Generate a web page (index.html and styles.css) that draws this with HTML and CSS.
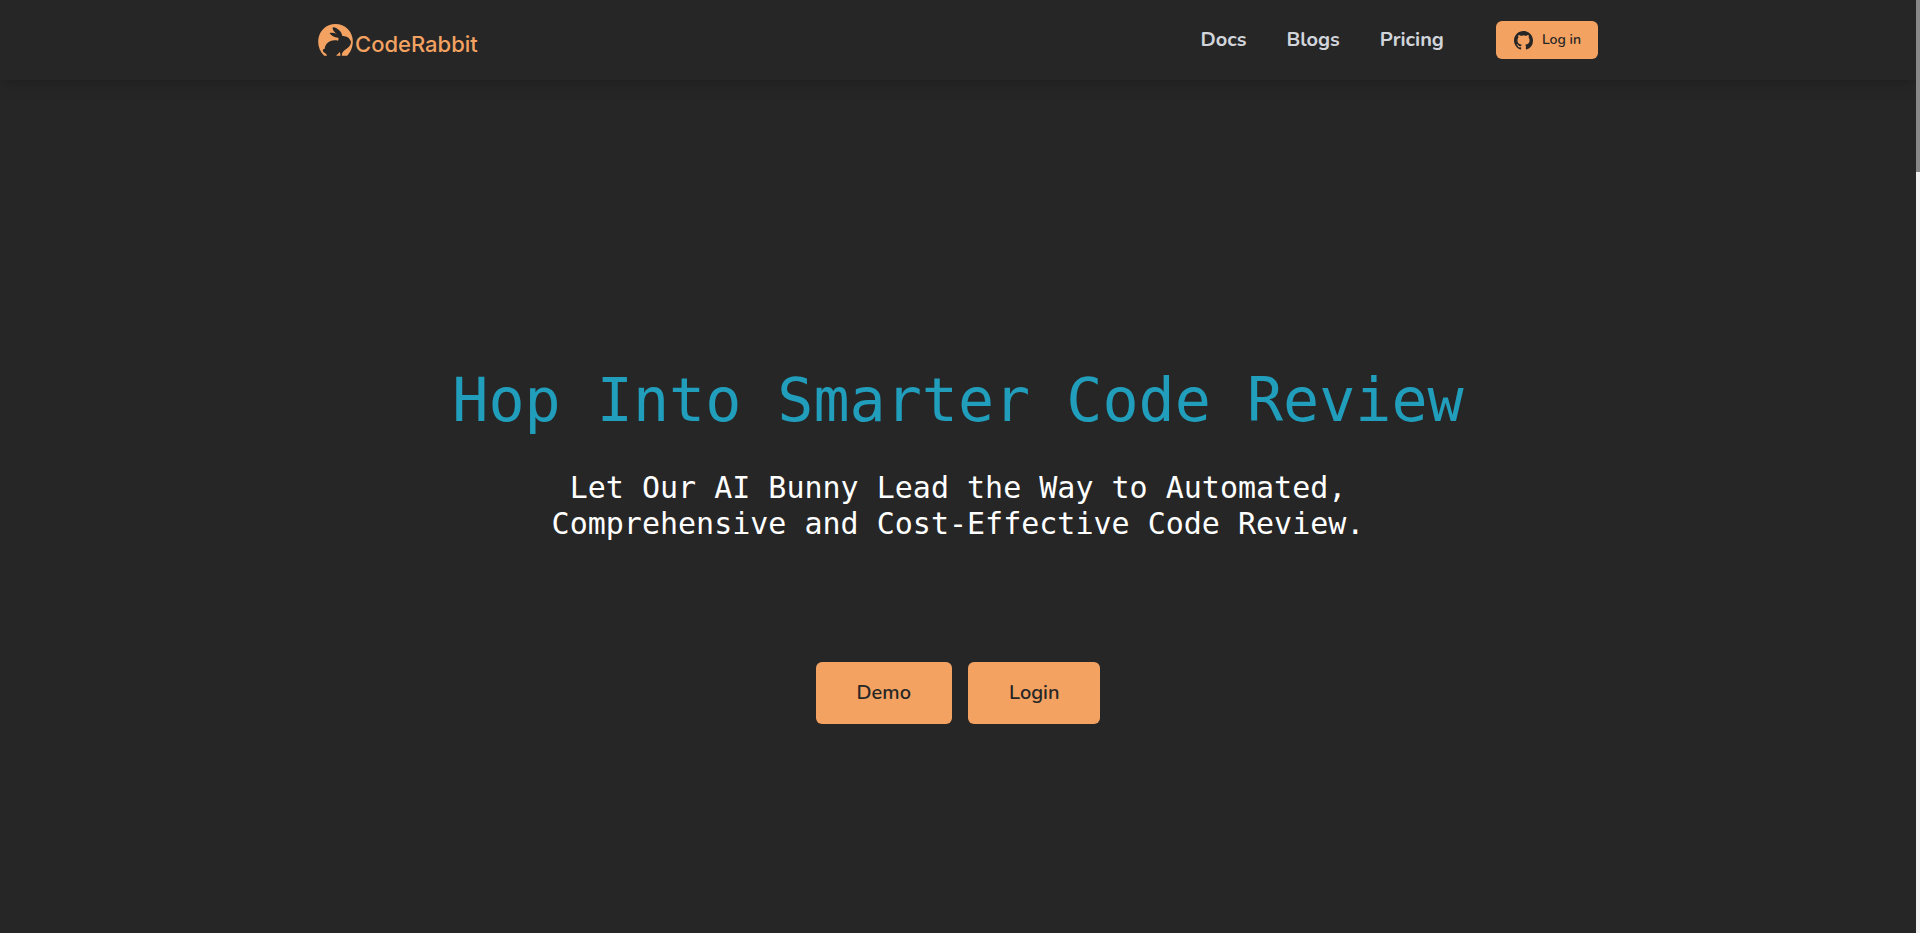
FILE: index.html
```html
<!DOCTYPE html>
<html lang="en">
<head>
<meta charset="utf-8">
<meta name="viewport" content="width=device-width, initial-scale=1">
<title>CodeRabbit</title>
<link rel="stylesheet" href="styles.css">
</head>
<body>
<div class="page">
  <header class="header">
    <div class="header-inner">
      <a class="logo" href="#">
        <svg class="logo-mark" viewBox="0 0 104 96" aria-hidden="true">
          <path fill="#f4a261" d="M18 95C6 84 0 70 0 52A52 52 0 0 1 104 52C104 70 97 85 87 95H71C71 88 73 84 79 79C86 74 93 69 96 63C98 60 99 56 98 52C95 44 88 38 79 37C76 36 74 36 72 35C71 27 65 18 54 12C49 10 44 9 43 12C44 19 49 25 56 30C49 26 41 25 34 27C39 35 48 40 60 41C62 44 61 48 59 50C48 47 35 49 27 58C22 63 20 69 20 74C14 74 12 80 16 84C20 87 25 90 27 95Z"/>
          <path fill="#f4a261" d="M54 95C57 91 61 89 65 84C66 87 67 91 67 95Z"/>
        </svg>
        <span class="logo-text">CodeRabbit</span>
      </a>
      <nav class="nav">
        <a class="nav-link" href="#">Docs</a>
        <a class="nav-link" href="#">Blogs</a>
        <a class="nav-link" href="#">Pricing</a>
        <button class="button button-small" type="button">
          <svg class="github" viewBox="0 0 16 16" aria-hidden="true"><path fill="currentColor" d="M8 0C3.58 0 0 3.58 0 8c0 3.54 2.29 6.53 5.47 7.59.4.07.55-.17.55-.38 0-.19-.01-.82-.01-1.49-2.01.37-2.53-.49-2.69-.94-.09-.23-.48-.94-.82-1.13-.28-.15-.68-.52-.01-.53.63-.01 1.08.58 1.23.82.72 1.21 1.87.87 2.33.66.07-.52.28-.87.51-1.07-1.78-.2-3.64-.89-3.64-3.95 0-.87.31-1.59.82-2.15-.08-.2-.36-1.02.08-2.12 0 0 .67-.21 2.2.82.64-.18 1.32-.27 2-.27s1.36.09 2 .27c1.53-1.04 2.2-.82 2.2-.82.44 1.1.16 1.92.08 2.12.51.56.82 1.27.82 2.15 0 3.07-1.87 3.75-3.65 3.95.29.25.54.73.54 1.48 0 1.07-.01 1.93-.01 2.2 0 .21.15.46.55.38A8.01 8.01 0 0 0 16 8c0-4.42-3.58-8-8-8Z"/></svg>
          Log in
        </button>
      </nav>
    </div>
  </header>
  <main class="hero">
    <h1 class="title">Hop Into Smarter Code Review</h1>
    <p class="subtitle">Let Our AI Bunny Lead the Way to Automated,<br>Comprehensive and Cost-Effective Code Review.</p>
    <div class="actions">
      <button class="button button-large" type="button">Demo</button>
      <button class="button button-large" type="button">Login</button>
    </div>
  </main>
</div>
<div class="scrollbar" aria-hidden="true"><div class="scrollbar-thumb"></div></div>
</body>
</html>
```
FILE: styles.css
```css
* {
  box-sizing: border-box;
}

body {
  margin: 0;
  min-height: 100vh;
  display: flex;
  background: #262626;
  font-family: Nunito, Lato, sans-serif;
}

.page {
  flex: 1;
  min-width: 0;
  display: flex;
  flex-direction: column;
}

.header {
  padding: 0 24px;
  box-shadow: 0 10px 15px -3px rgba(0, 0, 0, 0.1), 0 4px 6px -4px rgba(0, 0, 0, 0.1);
}

.header-inner {
  max-width: 1280px;
  min-height: 80px;
  margin: 0 auto;
  display: flex;
  align-items: center;
  justify-content: space-between;
}

.logo {
  display: flex;
  align-items: flex-end;
  gap: 2px;
  color: #f4a261;
  text-decoration: none;
}

.logo-mark {
  width: 35px;
  height: 32px;
}

.logo-text {
  font: 500 22px/24px Inter, sans-serif;
}

.nav {
  display: flex;
  align-items: center;
  gap: 40px;
}

.nav-link {
  color: #d1d5db;
  font-size: 20px;
  line-height: 28px;
  font-weight: 700;
  text-decoration: none;
}

.button {
  display: inline-flex;
  align-items: center;
  justify-content: center;
  border: 0;
  border-radius: 6px;
  background: #f4a261;
  color: #262626;
  font-family: inherit;
  font-weight: 600;
  cursor: pointer;
}

.button-small {
  gap: 9px;
  margin-left: 12px;
  padding: 9px 17px 9px 18px;
  font-size: 14px;
  line-height: 20px;
}

.github {
  width: 19px;
  height: 19px;
}

.hero {
  flex: 1;
  display: flex;
  flex-direction: column;
  align-items: center;
  justify-content: center;
  padding: 80px 24px 0;
  text-align: center;
}

.title {
  margin: 0;
  color: #219ebc;
  font: 400 60px/60px "DejaVu Sans Mono", monospace;
}

.subtitle {
  margin: 40px 0 0;
  color: #fff;
  font: 400 30px/36px "DejaVu Sans Mono", monospace;
}

.actions {
  display: flex;
  gap: 16px;
  margin-top: 120px;
}

.button-large {
  padding: 17px 41px;
  font-size: 20px;
  line-height: 28px;
}

.scrollbar {
  width: 4px;
  background: #f1f1f1;
}

.scrollbar-thumb {
  height: 172px;
  background: #888;
}
```
